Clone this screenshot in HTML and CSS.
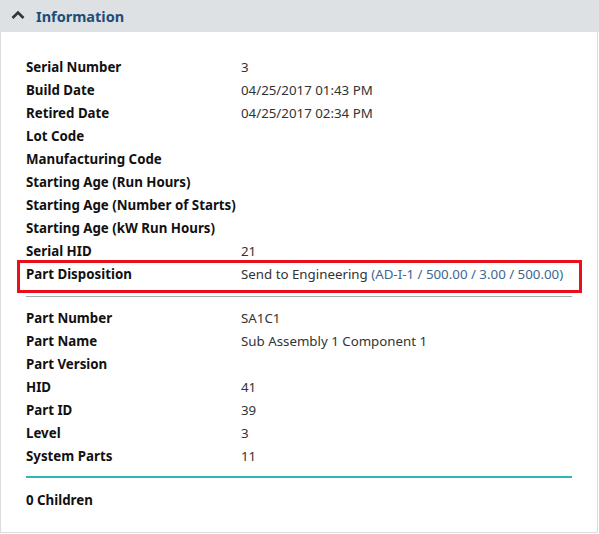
FILE: index.html
```html
<!DOCTYPE html>
<html>
<head>
<meta charset="utf-8">
<link rel="stylesheet" href="styles.css">
</head>
<body>
<div class="panel">
  <div class="panel-header">
    <svg class="chevron" width="14" height="10" viewBox="0 0 14 10"><path d="M1.5 8 L7 2.5 L12.5 8" fill="none" stroke="#333" stroke-width="2.6"/></svg>
    <span class="title">Information</span>
  </div>
  <div class="panel-body">
    <div class="grid">
      <div class="label">Serial Number</div><div class="value">3</div>
      <div class="label">Build Date</div><div class="value">04/25/2017 01:43 PM</div>
      <div class="label">Retired Date</div><div class="value">04/25/2017 02:34 PM</div>
      <div class="label">Lot Code</div><div class="value"></div>
      <div class="label">Manufacturing Code</div><div class="value"></div>
      <div class="label">Starting Age (Run Hours)</div><div class="value"></div>
      <div class="label">Starting Age (Number of Starts)</div><div class="value"></div>
      <div class="label">Starting Age (kW Run Hours)</div><div class="value"></div>
      <div class="label">Serial HID</div><div class="value">21</div>
      <div class="row-hl">
        <div class="label">Part Disposition</div><div class="value">Send to Engineering <span class="ref">(AD-I-1 / 500.00 / 3.00 / 500.00)</span></div>
      </div>
    </div>
    <hr class="sep">
    <div class="grid">
      <div class="label">Part Number</div><div class="value">SA1C1</div>
      <div class="label">Part Name</div><div class="value">Sub Assembly 1 Component 1</div>
      <div class="label">Part Version</div><div class="value"></div>
      <div class="label">HID</div><div class="value">41</div>
      <div class="label">Part ID</div><div class="value">39</div>
      <div class="label">Level</div><div class="value">3</div>
      <div class="label">System Parts</div><div class="value">11</div>
    </div>
    <hr class="sep-teal">
    <div class="children">0 Children</div>
  </div>
</div>
</body>
</html>
```
FILE: styles.css
```css
html, body {
  margin: 0;
  padding: 0;
  background: #fff;
}
body {
  font-family: "Noto Sans", "Open Sans", sans-serif;
  font-size: 13.3px;
  color: #222;
}
.panel {
  width: 599px;
  height: 534px;
  box-sizing: border-box;
}
.panel-header {
  height: 32px;
  background: #dee1e3;
  display: flex;
  align-items: center;
  padding-left: 11px;
  box-sizing: border-box;
}
.chevron {
  display: block;
  margin-right: 11px;
  margin-top: -2px;
}
.title {
  font-size: 14.5px;
  font-weight: bold;
  color: #1d4d78;
}
.panel-body {
  width: 598px;
  height: 501px;
  box-sizing: border-box;
  border: 1px solid #dcdcdc;
  border-top: none;
  padding: 24px 25px 0 25px;
}
.grid {
  display: grid;
  grid-template-columns: 215px 1fr;
  line-height: 23px;
}
.label {
  font-weight: bold;
  color: #111;
  white-space: nowrap;
}
.value {
  color: #333;
  white-space: nowrap;
}
.row-hl {
  grid-column: 1 / 3;
  display: grid;
  grid-template-columns: 215px 1fr;
  position: relative;
}
.row-hl::after {
  content: "";
  position: absolute;
  left: -9px;
  right: -10px;
  top: -3px;
  bottom: -7px;
  border: 3px solid #e8101a;
}
.ref {
  color: #3a6792;
}
.sep {
  border: none;
  border-top: 1px solid #a0b0b0;
  margin: 10px 0 10px 0;
}
.sep-teal {
  border: none;
  border-top: 2px solid #2cb8b8;
  margin: 8px 0 0 0;
}
.children {
  font-weight: bold;
  color: #111;
  line-height: 23px;
  margin-top: 11px;
}
```
